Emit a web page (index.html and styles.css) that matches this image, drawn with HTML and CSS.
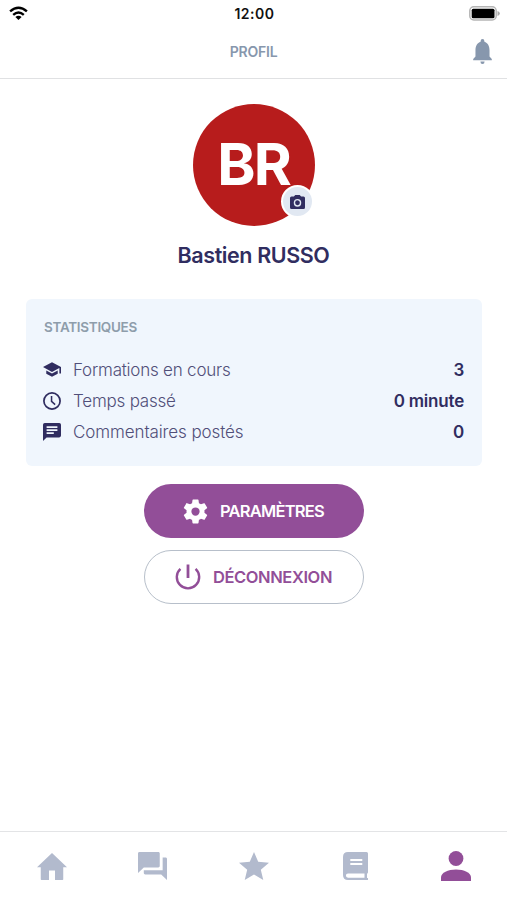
FILE: index.html
```html
<!DOCTYPE html>
<html lang="fr">
<head>
<meta charset="utf-8">
<title>Profil</title>
<link rel="stylesheet" href="styles.css">
</head>
<body>
<div class="status">
  <svg class="wifi" viewBox="0 0 19 15" fill="none" stroke="#000" stroke-width="2.4"><path d="M1.100 5.400Q9.500-2 17.900 5.400M4.200 8.800Q9.500 4.200 14.800 8.800" fill="none"/><path d="M9.500 14L6.400 11Q9.500 8.600 12.600 11Z" fill="#000" stroke="none"/></svg>
  <span class="time">12:00</span>
  <svg class="battery" viewBox="0 0 31 15"><rect x=".8" y=".8" width="26.4" height="13.2" rx="4" fill="#fff" stroke="#b5b5b5" stroke-width="1.5"/><rect x="2.7" y="2.7" width="22.8" height="9.5" rx="1.5" fill="#000"/><path d="M28.500 5Q30.800 5.800 30.800 7.400T28.500 10Z" fill="#aaa"/></svg>
</div>
<header class="header">
  <h1 class="title">PROFIL</h1>
  <svg class="bell" viewBox="2 2 20 22" preserveAspectRatio="none"><path d="M12 2a2 2 0 0 0-2 2v.500C6.500 5.400 4.600 8.300 4.600 12v5.500L2.200 19.500v1.300h19.600v-1.300l-2.400-2V12c0-3.700-1.900-6.600-5.400-7.500V4a2 2 0 0 0-2-2zM9.800 21.700a2.200 2.300 0 0 0 4.400 0z"/></svg>
</header>
<main class="main">
  <div class="avatar"><span class="initials">BR</span>
    <div class="camera"><svg viewBox="2 2 20 18" preserveAspectRatio="none"><path fill-rule="evenodd" d="M9 2L7.170 4H4a2 2 0 0 0-2 2v12a2 2 0 0 0 2 2h16a2 2 0 0 0 2-2V6a2 2 0 0 0-2-2h-3.170L15 2zm3 5a5 5 0 1 1 0 10 5 5 0 0 1 0-10zm0 1.800a3.200 3.200 0 1 0 0 6.400 3.200 3.200 0 0 0 0-6.400z"/></svg></div>
  </div>
  <h2 class="name">Bastien RUSSO</h2>
  <section class="stats">
    <h3 class="heading">STATISTIQUES</h3>
    <div class="row"><svg viewBox="1 3 22 18" class="cap"><path d="M5 13.180v4L12 21l7-3.820v-4L12 17zM12 3L1 9l11 6 9-4.910V17h2V9z"/></svg><span class="label">Formations en cours</span><b>3</b></div>
    <div class="row"><svg viewBox="2 2 20 20" class="clock"><circle cx="12" cy="12" r="9" fill="none" stroke="#302d60" stroke-width="1.900"/><path d="M11.500 6.500V12.500L15.500 16" fill="none" stroke="#302d60" stroke-width="1.700"/></svg><span class="label">Temps passé</span><b>0 minute</b></div>
    <div class="row"><svg viewBox="2 2 20 20" class="msg"><path fill-rule="evenodd" d="M20 2H4a2 2 0 0 0-2 2v18l4-4h14a2 2 0 0 0 2-2V4a2 2 0 0 0-2-2zM6 5.700h12v1.800H6zm0 3.300h12v1.800H6zm0 3.300h8v1.800H6z"/></svg><span class="label wide">Commentaires postés</span><b>0</b></div>
  </section>
  <button class="btn primary"><svg viewBox="2 2 20 20"><path d="M19.140 12.940c.040-.300.060-.610.060-.940s-.020-.640-.070-.940l2.030-1.580c.180-.140.230-.410.120-.610l-1.920-3.320c-.120-.220-.370-.290-.590-.220l-2.390.960c-.500-.380-1.030-.700-1.620-.940l-.360-2.540c-.040-.240-.240-.410-.480-.410h-3.840c-.240 0-.430.170-.470.410l-.360 2.540c-.590.240-1.130.570-1.620.940l-2.390-.960c-.220-.080-.470 0-.590.220L2.740 8.870c-.120.210-.080.470.120.610l2.030 1.580c-.050.300-.090.630-.090.940s.020.640.070.940l-2.030 1.580c-.180.140-.230.410-.120.610l1.920 3.320c.120.220.370.290.590.220l2.390-.960c.500.380 1.030.700 1.620.940l.360 2.540c.050.240.240.410.480.410h3.840c.240 0 .440-.170.470-.410l.360-2.540c.590-.240 1.130-.560 1.620-.940l2.390.960c.220.080.470 0 .590-.220l1.920-3.320c.120-.220.070-.470-.120-.610zM12 15.300a3.300 3.300 0 1 1 0-6.600 3.300 3.300 0 0 1 0 6.600z"/></svg><span>PARAMÈTRES</span></button>
  <button class="btn outline"><svg viewBox="0 0 26 26" fill="none" stroke="#924e98" stroke-width="2.400"><path stroke-width="2.800" d="M13 .5v13.500"/><path d="M5.400 4.900A11.200 11.200 0 1 0 20.600 4.900"/></svg><span>DÉCONNEXION</span></button>
</main>
<nav class="nav">
  <a><svg class="home" viewBox="2 3 20 17" preserveAspectRatio="none"><path d="M10 20v-6h4v6h5q.500 0 .500-.500V12H22L12 3 2 12h2.500v7.500q0 .500.500.500z"/></svg></a>
  <a><svg class="chat" viewBox="2 2 20 20" preserveAspectRatio="none"><path d="M21 6h-2v9H6v2c0 .550.450 1 1 1h11l4 4V7c0-.550-.450-1-1-1zm-4 6V3c0-.550-.450-1-1-1H3c-.550 0-1 .450-1 1v14l4-4h10c.550 0 1-.450 1-1z"/></svg></a>
  <a><svg class="star" viewBox="2 2 20 19" preserveAspectRatio="none"><path d="M12 17.270L18.180 21l-1.640-7.030L22 9.240l-7.190-.610L12 2 9.190 8.630 2 9.240l5.460 4.730L5.820 21z"/></svg></a>
  <a><svg class="book" viewBox="0 0 25 28" preserveAspectRatio="none"><path fill-rule="evenodd" d="M5 0h18.500q1.500 0 1.500 1.500v19l-1 1.500v4h1v2H5q-5 0-5-5V5q0-5 5-5zM7.300 7v1.900h12V7zm0 4v1.900h12V11zM5 21.500a2.100 2.100 0 0 0 0 4.200h16.500v-4.200z"/></svg></a>
  <a><svg class="user" viewBox="0 0 30 30"><circle cx="15" cy="7.500" r="7.400"/><path d="M0 30v-3.500C0 21.500 7 18.500 15 18.500s15 3 15 8V30z"/></svg></a>
</nav>
</body>
</html>
```
FILE: styles.css
```css
* { box-sizing: border-box; }
body {
  margin: 0;
  height: 900px;
  display: flex;
  flex-direction: column;
  background: #fff;
  color: #302d60;
  font-family: Inter, "Liberation Sans", sans-serif;
}
svg { display: block; flex: none; fill: #302d60; }
h1, h2, h3 { margin: 0; }
.status {
  height: 26px;
  display: grid;
  grid-template-columns: 1fr auto 1fr;
  align-items: center;
  padding: 0 7px 0 9px;
}
.wifi { width: 19px; height: 15px; }
.battery { width: 31px; height: 15px; justify-self: end; }
.time { font-size: 14px; font-weight: 600; color: #111; letter-spacing: .5px; }
.header {
  height: 53px;
  display: grid;
  grid-template-columns: 1fr auto 1fr;
  align-items: center;
  padding: 0 15px 1px;
  border-bottom: 1px solid #e0e1e3;
}
.title { grid-column: 2; font-size: 14px; font-weight: 600; color: #8797ad; letter-spacing: -.2px; }
.bell { width: 19px; height: 25px; justify-self: end; fill: #8797ad; }
.main { flex: 1; display: flex; flex-direction: column; align-items: center; padding-top: 25px; }
.avatar {
  position: relative;
  width: 122px;
  height: 122px;
  border-radius: 50%;
  background: #b71c1c;
  color: #fff;
  display: flex;
  align-items: center;
  justify-content: center;
}
.initials { font-size: 58px; line-height: 60px; font-weight: 700; letter-spacing: -2px; padding-bottom: 2px; }
.camera {
  position: absolute;
  right: 1px;
  bottom: 8px;
  width: 33px;
  height: 33px;
  border: 2px solid #fff;
  border-radius: 50%;
  background: #e1e8f2;
  display: flex;
  align-items: center;
  justify-content: center;
}
.camera svg { width: 15px; height: 14px; }
.name { margin-top: 13px; font-size: 21.5px; line-height: 32px; font-weight: 600; letter-spacing: -.4px; }
.stats {
  width: 456px;
  height: 167px;
  margin: 28px 0 18px 1px;
  padding: 18px 18px 0;
  border-radius: 6px;
  background: #f0f6fd;
}
.heading { font-size: 13.5px; line-height: 20px; font-weight: 600; color: #8e9dab; letter-spacing: -.3px; margin-bottom: 17px; }
.row { height: 31.300px; display: flex; align-items: center; font-size: 17px; }
.row svg { width: 18px; margin-right: 11px; margin-left: -1px; }
.row b { margin-left: auto; font-weight: 600; letter-spacing: -.2px; }
.cap { height: 15px; }
.clock, .msg { height: 18px; }
.label { color: #514f79; font-weight: 300; letter-spacing: -.22px; margin-left: 1px; }
.label.wide { letter-spacing: -.1px; }
.btn {
  width: 220px;
  height: 54px;
  border: 0;
  border-radius: 27px;
  padding: 0;
  display: flex;
  align-items: center;
  justify-content: center;
  gap: 12px;
  font: 600 16.5px Inter, "Liberation Sans", sans-serif;
}
.primary { background: #924e98; color: #fff; margin-bottom: 12px; letter-spacing: -.75px; }
.primary svg { width: 25px; height: 25px; fill: #fff; }
.outline { background: #fff; color: #924e98; border: 1px solid #b7bfca; letter-spacing: -.4px; }
.outline svg { width: 26px; height: 26px; fill: none; }
.nav {
  height: 69px;
  border-top: 1px solid #e3e4e6;
  display: grid;
  grid-template-columns: repeat(5, 1fr);
  padding-left: 1px;
}
.nav a { display: flex; align-items: center; justify-content: center; }
.nav svg { fill: #b2bacd; }
.home { width: 30px; height: 27px; }
.chat { width: 29px; height: 28px; }
.star { width: 30px; height: 28px; }
.book { width: 25px; height: 28px; }
.nav .user { width: 30px; height: 30px; fill: #924e98; }
```
